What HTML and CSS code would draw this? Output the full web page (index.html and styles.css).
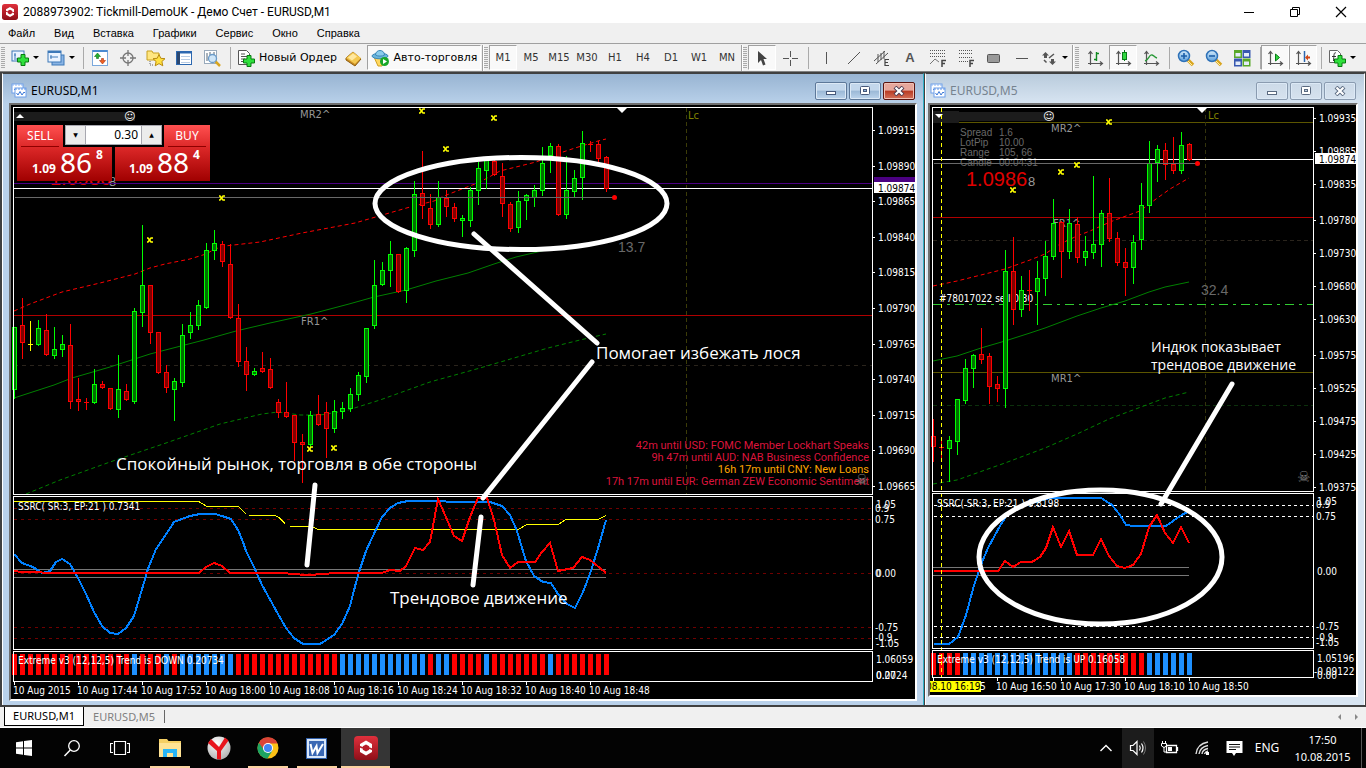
FILE: index.html
```html
<!DOCTYPE html>
<html lang="ru">
<head>
<meta charset="utf-8">
<title>2088973902: Tickmill-DemoUK - Демо Счет - EURUSD,M1</title>
<link rel="stylesheet" href="styles.css">
</head>
<body>
<svg width="0" height="0" class="defs" aria-hidden="true">
  <defs>
    <linearGradient id="gBlue" x1="0" y1="0" x2="0" y2="1"><stop offset="0" stop-color="#d6ecfb"/><stop offset="1" stop-color="#5b9fdc"/></linearGradient>
    <linearGradient id="gRed" x1="0" y1="0" x2="0" y2="1"><stop offset="0" stop-color="#e0303c"/><stop offset="1" stop-color="#8e0f18"/></linearGradient>
    <radialGradient id="gBall" cx=".4" cy=".3" r=".8"><stop offset="0" stop-color="#fff"/><stop offset="1" stop-color="#aaa"/></radialGradient>
    <symbol id="plus" viewBox="0 0 12 12"><path d="M4 .5h4V4h3.500v4H8v3.500H4V8H.5V4H4z" fill="#2fe03c" stroke="#087a10"/></symbol>
    <symbol id="mt" viewBox="0 0 24 24"><rect width="24" height="24" rx="4" fill="url(#gRed)"/><path d="M12 4.500l6 3.500v8l-6 3.500-6-3.500V8z" fill="#fff"/><path d="M12 8.500l3.200 1.800v3.500L12 15.600l-3.200-1.800v-3.500z" fill="#b81c28"/><path d="M4 10l5 2M20 14l-5-2" stroke="#b81c28" stroke-width="1.500"/></symbol>
    <symbol id="lens" viewBox="0 0 18 18"><path d="M11 11l5 5" stroke="#d9a520" stroke-width="3.500"/><path d="M11 12l4 4" stroke="#fff0a0"/><circle cx="7" cy="7" r="5.500" fill="url(#gBlue)" stroke="#2f72b8" stroke-width="1.500"/></symbol>
    <symbol id="axes" viewBox="0 0 18 18"><path d="M4.500 16V3M2.500 5l2-2.500 2 2.500M2 14.500h14M14 12.500l2.500 2-2.500 2" fill="none" stroke="#555" stroke-width="1.200"/></symbol>
    <symbol id="chartwin" viewBox="0 0 16 16"><rect x="1" y="1" width="11" height="9" fill="#fff" stroke="#6fa0ea"/><path d="M1 2h11" stroke="#8ab4f0" stroke-dasharray="2 1"/><path d="M3 7l2-2 2 2" fill="none" stroke="#3a78d8"/><rect x="4" y="5" width="11" height="9" fill="#fff" stroke="#6fa0ea"/><path d="M4 6h11" stroke="#5a93e8" stroke-dasharray="2 1"/><path d="M5.500 10l1.500 2 2-3.500 2 3.500 2-3 1 1" fill="none" stroke="#3a78d8"/></symbol>
  </defs>
</svg>

<header class="titlebar">
  <svg class="app-ico" viewBox="0 0 24 24"><use href="#mt"/></svg>
  <h1>2088973902: Tickmill-DemoUK - Демо Счет - EURUSD,M1</h1>
  <div class="wbtns">
    <button aria-label="Свернуть"><svg width="12" height="12"><path d="M1 6.500h10" stroke="#000"/></svg></button>
    <button aria-label="Восстановить"><svg width="12" height="12"><path d="M1.500 3.500h7v7h-7zM3.500 3V1.500h7v7H9" fill="none" stroke="#000"/></svg></button>
    <button aria-label="Закрыть"><svg width="12" height="12"><path d="M1 1l10 10M11 1L1 11" stroke="#000" stroke-width="1.200"/></svg></button>
  </div>
</header>

<nav class="menu">
  <button>Файл</button><button>Вид</button><button>Вставка</button><button>Графики</button><button>Сервис</button><button>Окно</button><button>Справка</button>
</nav>

<div class="toolbar" role="toolbar">
  <span class="grip"></span>
  <button class="tb drop" aria-label="Новый график"><svg width="18" height="18"><rect x="1" y="2" width="12" height="10" fill="#eaf3ff" stroke="#3c78b8"/><path d="M4 4v5M3 6h2M3 10h8" stroke="#3c78b8"/><use href="#plus" x="6" y="5" width="12" height="12"/></svg></button>
  <button class="tb drop" aria-label="Профили"><svg width="18" height="18"><rect x="5" y="6" width="12" height="10" fill="#8ab4e4" stroke="#3c78b8"/><rect x="1" y="2" width="13" height="11" fill="#eaf3ff" stroke="#3c78b8"/><path d="M1 3h13" stroke="#3c78b8" stroke-width="2"/><path d="M4 6v4M3 8h8" stroke="#3c78b8"/></svg></button>
  <span class="sep s7"></span>
  <button class="tb" aria-label="Обзор рынка"><svg width="18" height="18"><rect x="1.500" y="1.500" width="15" height="15" fill="#fff" stroke="#7aa8dc"/><path d="M1.500 2h15" stroke="#4a8ad0" stroke-width="2"/><path d="M6.500 4l3 3.500h-2v2h-2v-2h-2z" fill="#20b030" stroke="#107018" stroke-width=".6"/><path d="M11.500 15l3-3.500h-2v-2h-2v2h-2z" fill="#f06020" stroke="#a83010" stroke-width=".6"/></svg></button>
  <button class="tb" aria-label="Окно данных"><svg width="18" height="18"><circle cx="9" cy="9" r="5" fill="none" stroke="#777" stroke-width="1.300"/><path d="M9 1v6M9 11v6M1 9h6M11 9h6" stroke="#777" stroke-width="1.300"/></svg></button>
  <button class="tb" aria-label="Навигатор"><svg width="20" height="18"><path d="M1 2h5l1 2h6v7H1z" fill="#ffe680" stroke="#c8a020"/><path d="M4 12v4h3" stroke="#666" stroke-dasharray="1" fill="none"/><path d="M13 5.500l1.800 3.800 4.200.4-3.100 2.800.9 4.300-3.800-2.200-3.800 2.200.9-4.300L7 9.700l4.200-.4z" fill="#ffe040" stroke="#b88a10"/></svg></button>
  <button class="tb" aria-label="Терминал"><svg width="18" height="18"><rect x="1.500" y="2.500" width="15" height="13" fill="#fff" stroke="#2c68b0"/><path d="M2 3.500h14" stroke="#2c68b0" stroke-width="2"/><path d="M3.500 3v12" stroke="#2c4870" stroke-width="3"/><path d="M6 7.500h9M6 10.500h9M6 13.500h9" stroke="#b8cce4"/></svg></button>
  <button class="tb" aria-label="Тестер стратегий"><svg width="18" height="18"><rect x="1.500" y="1.500" width="12" height="13" fill="#fff" stroke="#9ab"/><path d="M4 4v8M7 3v7M11 3v4" stroke="#567"/><path d="M12 12l5 5" stroke="#d9a520" stroke-width="2.500"/><circle cx="9.500" cy="9.500" r="4" fill="#cfe6f8" stroke="#6a9ac8" stroke-width="1.300"/></svg></button>
  <span class="sep"></span>
  <button class="tb text order"><svg width="20" height="18"><path d="M2.500 1.500h8l3 3v11h-11z" fill="#fff" stroke="#555"/><path d="M5 5h4M5 7.500h6M5 10h4M5 12.500h4" stroke="#555"/><use href="#plus" x="7" y="6" width="12" height="12"/></svg>Новый Ордер</button>
  <button class="tb" aria-label="MetaEditor"><svg width="18" height="18"><path d="M2 9l7-6 8 7-6 7-9-6z" fill="#c88a20" stroke="#906010"/><path d="M2 9l7-6 8 6-6 6z" fill="#f4c850"/><path d="M4 8.500l5-4 4 3-5 4z" fill="#ffe8a0"/></svg></button>
  <button class="tb text on auto" aria-pressed="true"><svg width="20" height="18"><path d="M3 8h12l-4 9H7z" fill="#ffd860" stroke="#d0a020"/><ellipse cx="9" cy="7" rx="8" ry="2.800" fill="#6ab4dc" stroke="#3a88b8"/><path d="M4.500 6c0-6 9-6 9 0-2 1.500-7 1.500-9 0z" fill="#8accec" stroke="#3a88b8"/><circle cx="13.500" cy="12.500" r="4.500" fill="#18a828"/><path d="M12 10l4 2.500-4 2.500z" fill="#fff"/></svg>Авто-торговля</button>
  <span class="edge"></span><span class="grip g2"></span>
  <button class="tb tf on" aria-pressed="true">M1</button><button class="tb tf">M5</button><button class="tb tf">M15</button><button class="tb tf">M30</button><button class="tb tf">H1</button><button class="tb tf">H4</button><button class="tb tf">D1</button><button class="tb tf">W1</button><button class="tb tf">MN</button>
  <span class="edge"></span><span class="grip g2"></span>
  <button class="tb on" aria-label="Курсор" aria-pressed="true"><svg width="18" height="18"><path d="M5 2v12l3-3 2 5.500 2.500-1L10.500 10H14z" fill="#444"/></svg></button>
  <button class="tb" aria-label="Перекрестие"><svg width="18" height="18"><path d="M9.500 2v6M9.500 11v6M2 9.500h6M11 9.500h6" stroke="#555"/></svg></button>
  <span class="sep"></span>
  <button class="tb" aria-label="Вертикальная линия"><svg width="18" height="18"><path d="M9.500 3v12" stroke="#555"/></svg></button>
  <button class="tb" aria-label="Трендовая линия"><svg width="18" height="18"><path d="M3 15L15 3" stroke="#555"/></svg></button>
  <button class="tb" aria-label="Канал"><svg width="18" height="18"><path d="M1 12L12 2M3 15L15 4M5 5v8M8 4v7M11 2v8" stroke="#555"/><path d="M16 10.500h-4v6h4M12 13.500h3" fill="none" stroke="#444" stroke-width="1.200"/></svg></button>
  <button class="tb letter" aria-label="Текст">A</button>
  <button class="tb" aria-label="Фибоначчи"><svg width="18" height="18"><path d="M1 1.500h15M1 4.500h15M1 7.500h15" stroke="#555" stroke-dasharray="1"/><path d="M1 15l5-5 4 3" fill="none" stroke="#777"/><path d="M13 18v-6.500h4M13 14.500h3" fill="none" stroke="#444" stroke-width="1.500"/></svg></button>
  <button class="tb" aria-label="Веер"><svg width="18" height="18"><path d="M2 1.500h13M2 4.500h13M2 8.500h13M2 12.500h9" stroke="#555" stroke-dasharray="1"/><path d="M13 18v-6.500h4M13 14.500h3" fill="none" stroke="#444" stroke-width="1.500"/></svg></button>
  <button class="tb" aria-label="Прямоугольник"><svg width="18" height="18"><rect x="2.500" y="5.500" width="12" height="8" rx="1" fill="#999" stroke="#555"/></svg></button>
  <button class="tb" aria-label="Горизонтальная линия"><svg width="18" height="18"><path d="M3 9.500h12" stroke="#555"/></svg></button>
  <button class="tb drop" aria-label="Стрелки"><svg width="18" height="18"><path d="M5.500 3l3.500 3.500H7V9H4V6.500H2zM12.500 16L9 12.500h2V10h3v2.500h2z" fill="#555"/><path d="M4 11l2.500 2.500M9 9l5-4" stroke="#555" stroke-width="1.500"/></svg></button>
  <span class="edge"></span><span class="grip"></span>
  <button class="tb" aria-label="Бары"><svg width="18" height="18"><use href="#axes" width="18" height="18"/><path d="M10.500 3v9M8 10.500h2.500M10.500 4.500H13" stroke="#108a20" stroke-width="1.400"/></svg></button>
  <button class="tb on" aria-label="Свечи" aria-pressed="true"><svg width="18" height="18"><use href="#axes" width="18" height="18"/><path d="M10.500 1v11" stroke="#0a7a18"/><rect x="8.500" y="3.500" width="4" height="7" fill="#30d840" stroke="#0a7a18"/></svg></button>
  <button class="tb" aria-label="Линия"><svg width="18" height="18"><use href="#axes" width="18" height="18"/><path d="M3 12c4-1 4-7 7-6 3 1 2 2 5 3" fill="none" stroke="#2a9a38" stroke-width="1.400"/></svg></button>
  <span class="sep s7"></span>
  <button class="tb" aria-label="Увеличить"><svg width="18" height="18"><use href="#lens" width="18" height="18"/><path d="M7 4v6M4 7h6" stroke="#1c5fa8" stroke-width="1.600"/></svg></button>
  <button class="tb" aria-label="Уменьшить"><svg width="18" height="18"><use href="#lens" width="18" height="18"/><path d="M4 7h6" stroke="#1c5fa8" stroke-width="1.600"/></svg></button>
  <button class="tb" aria-label="Окна мозаикой"><svg width="18" height="18"><path d="M1 1h8v8H1zM9.500 9.500h8v8h-8z" fill="#58a828"/><path d="M9.500 1h8v8h-8zM1 9.500h8v8H1z" fill="#3858b0"/><path d="M2.500 4h5v3.500h-5zM11 4h5v3.500h-5zM2.500 12.500h5V16h-5zM11 12.500h5V16h-5z" fill="#e4ecf8"/></svg></button>
  <span class="sep s5"></span>
  <button class="tb on" aria-label="Автопрокрутка" aria-pressed="true"><svg width="18" height="18"><use href="#axes" width="18" height="18"/><path d="M9.500 5l4 3.500-4 3.500z" fill="#30d840" stroke="#0a7a18"/></svg></button>
  <button class="tb on" aria-label="Сдвиг графика" aria-pressed="true"><svg width="18" height="18"><use href="#axes" width="18" height="18"/><path d="M10.500 2v11" stroke="#2c68b0" stroke-width="1.500"/><path d="M11 8.500l3-3v2h2v2h-2v2z" fill="#d04818"/></svg></button>
  <span class="sep s7"></span>
  <button class="tb drop" aria-label="Индикаторы"><svg width="18" height="18"><path d="M1.500 1.500h8l3 3v9h-11z" fill="#fff" stroke="#666"/><path d="M8 4c-2-1-2 1-2.500 8M4 7.500h4" fill="none" stroke="#333"/><use href="#plus" x="6" y="6" width="12" height="12"/></svg></button>
</div>

<main class="workspace">
  <section class="win active">
    <header class="wtitle"><svg width="16" height="16"><use href="#chartwin"/></svg><h2>EURUSD,M1</h2>
      <button class="cap" aria-label="Свернуть"><svg width="14" height="10"><rect x="2.500" y="5.500" width="9" height="3" fill="#fff" stroke="#46587a"/></svg></button>
      <button class="cap" aria-label="Развернуть"><svg width="14" height="10"><rect x="2.500" y=".5" width="9" height="8" rx="1" fill="#fff" stroke="#46587a"/><rect x="5.500" y="3.500" width="3" height="2" fill="#8fb0d8" stroke="#46587a"/></svg></button>
      <button class="cap close" aria-label="Закрыть"><svg width="14" height="10"><path d="M3 1l8 8M11 1L3 9" stroke="#4a3a50" stroke-width="4"/><path d="M3.500 1.500l7 7M10.500 1.500l-7 7" stroke="#fff" stroke-width="2.200"/></svg></button>
    </header>
    <div class="chart-host">
      <svg class="chart" id="m1" viewBox="11 105 904 594" preserveAspectRatio="xMinYMin meet" role="img" aria-label="EURUSD M1">
        <rect x="14" y="112" width="121" height="9" fill="#1c1c1c"/><path d="M16 118h8l-4-4z" fill="#fff"/><text x="124" y="120" class="smile">☺</text>
        <g class="px">
          <path d="M14 365.500h858" stroke="#2a241c" stroke-dasharray="4 4"/>
          <path d="M686.500 108v386" stroke="#3c3c08" stroke-dasharray="4 3"/>
          <path d="M14 315.500h858" stroke="#b00000"/>
        </g>
        <text x="300" y="118" class="tag">MR2^</text><text x="301" y="325" class="tag">FR1^</text><text x="688" y="119" class="tag olive">Lc</text>
        <text x="50" y="185" class="bid">1.0986</text><text x="109" y="186" class="bid-s">8</text>
        <text x="618" y="252" class="num">13.7</text>
        <g class="thin">
          <polyline class="r dash" points="14,311 30,304 62,292 100,283 135,274 150,268 165,264 190,259 206,254 215,249 225,246 260,242 302,233 355,223 379,216 410,207 434,201 444,196 480,182 500,171 536,162 560,153 575,148 598,141 606,139"/>
          <polyline class="g" points="14,398 54,385 72,378 110,367 150,354 204,340 236,331 270,323 311,314 349,304 374,297 406,290 436,281 468,273 494,264 516,257 546,250"/>
          <polyline class="g dash" points="26,494 60,480 110,462 166,443 220,424 262,414 278,412 300,415 320,415 345,411 380,400 430,382 480,368 548,348 580,340 606,334"/>
        </g>
        <g class="px"><path d="M14 183.500h858" stroke="#4b0082"/><path d="M14 188.500h858" stroke="#fff"/></g>
        <g class="candles px"></g>
        <path class="px" d="M15 197.500h599" stroke="#696969"/><circle cx="614.500" cy="197.500" r="2.500" fill="#f00"/>
        <g class="marks"></g>
        <g class="news">
          <text x="869" y="449">42m until USD: FOMC Member Lockhart Speaks</text>
          <text x="869" y="461">9h 47m until AUD: NAB Business Confidence</text>
          <text x="869" y="473" class="or">16h 17m until CNY: New Loans</text>
          <text x="869" y="485">17h 17m until EUR: German ZEW Economic Sentiment</text>
        </g>
        <text x="855" y="485" class="skull">☠</text>
        <path d="M617 108h10l-5 5z" fill="#fff"/>
        <g class="px">
          <path d="M14 508.500h858M14 519.500h858M14 573.500h858M14 627.500h858M14 638.500h858" stroke="#700000" stroke-dasharray="3 4"/>
          <path d="M14 569.500h592M14 577.500h592" stroke="#777"/>
          <polyline class="y" points="14,501 198,501 206,506 238,506 246,514"/><path class="y" d="M249 515.500h26l4 2 6 6M290 526.500h22l6 3h200l9-5h31l8-5h32l8-4"/>
        </g>
        <g class="osc px">
          <polyline class="b" points="14,554 22,563 33,567 42,573 50,571 56,562 62,559 70,564 78,578 86,594 94,612 102,626 110,633 118,634 126,628 134,616 140,596 148,569 156,549 163,539 174,522 190,516 200,514 215,514 222,516 231,519 238,530 243,542 246,551 254,567 262,585 278,614 286,628 294,638 303,644 320,644 334,635 342,624 350,606 358,575 366,551 372,538 382,517 390,508 398,503 408,501 442,501 450,502 490,502 502,506 510,515 517,531 526,561 534,576 543,582 551,583 558,594 567,604 575,608 583,592 591,571 599,545 606,520"/>
          <polyline class="r" points="14,571 22,572 62,573 199,573 206,567 214,563 222,566 230,573 286,573 290,574 310,575 335,573 382,573 390,570 400,571 406,566 415,548 423,550 430,542 438,499 445,515 454,536 462,541 470,517 478,498 487,498 494,520 502,555 510,568 518,562 535,562 542,552 550,543 558,571 573,568 582,557 590,560 600,568 606,573"/>
        </g>
        <text x="18" y="510" class="lbl">SSRC( SR:3, EP:21 ) 0.7341</text>
        <g class="bars px"></g>
        <text x="18" y="664" class="lbl">Extreme v3 (12,12,5) Trend is DOWN 0.20734</text>
        <path class="px frame" d="M13.500 107.500h859v387h-859zM13.500 496.500h859v153h-859zM13.500 651.500h859v30h-859z"/>
        <g class="axis"></g>
        <rect x="874" y="177" width="41" height="6" fill="#4b0082"/><rect x="874" y="182" width="41" height="11" fill="#fff"/><text x="878" y="192" class="lbl now">1.09874</text>
        <g class="ink"><ellipse cx="521" cy="203.500" rx="146" ry="46"/><path d="M474 234L597 343M592 362L483 498M481 517l-8 68M315 485l-8 80"/></g>
        <g class="note big"><text x="596" y="359">Помогает избежать лося</text><text x="116" y="470">Спокойный рынок, торговля в обе стороны</text><text x="390" y="604">Трендовое движение</text></g>
      </svg>
      <form class="oneclick">
        <button type="button" class="deal sell"><span class="side">SELL</span><span class="price">1.09<b>86</b><sup>8</sup></span></button>
        <button type="button" class="deal buy"><span class="side">BUY</span><span class="price">1.09<b>88</b><sup>4</sup></span></button>
        <div class="lots"><button type="button" aria-label="Меньше">▼</button><input aria-label="Объем" value="0.30"><button type="button" aria-label="Больше">▲</button></div>
      </form>
    </div>
  </section>

  <section class="win idle">
    <header class="wtitle"><svg width="16" height="16"><use href="#chartwin"/></svg><h2>EURUSD,M5</h2>
      <button class="cap" aria-label="Свернуть"><svg width="14" height="10"><rect x="2.500" y="5.500" width="9" height="3" fill="#fff" stroke="#5a6a80"/></svg></button>
      <button class="cap" aria-label="Развернуть"><svg width="14" height="10"><rect x="2.500" y=".5" width="9" height="8" rx="1" fill="#fff" stroke="#5a6a80"/><rect x="5.500" y="3.500" width="3" height="2" fill="#c0d0e0" stroke="#5a6a80"/></svg></button>
      <button class="cap" aria-label="Закрыть"><svg width="14" height="10"><path d="M3 1l8 8M11 1L3 9" stroke="#5a6a80" stroke-width="4"/><path d="M3.500 1.500l7 7M10.500 1.500l-7 7" stroke="#fff" stroke-width="2.200"/></svg></button>
    </header>
    <div class="chart-host">
      <svg class="chart" id="m5" viewBox="930 105 426 590" preserveAspectRatio="xMinYMin meet" role="img" aria-label="EURUSD M5">
        <g class="px">
          <path d="M933 122.500h380M933 372.500h380" stroke="#5c5600"/>
          <path d="M933 240.500h380" stroke="#2a241c" stroke-dasharray="4 3"/>
          <path d="M933 405.500h380" stroke="#0c300c" stroke-dasharray="4 3"/>
          <path d="M1205.500 108v383" stroke="#33330c" stroke-dasharray="4 3"/>
          <path d="M933 217.500h380" stroke="#b00000"/>
          <path d="M933 304.500h380" stroke="#32cd32" stroke-dasharray="9 5 3 5"/>
        </g>
        <rect x="933" y="111" width="26" height="12" fill="#1c1c1c"/><rect x="959" y="112" width="95" height="9" fill="#1c1c1c"/><path d="M935 114h8l-4 4z" fill="#fff"/><text x="1043" y="120" class="smile">☺</text>
        <text x="1051" y="132" class="tag">MR2^</text><text x="1053" y="227" class="tag">FR1^</text><text x="1051" y="382" class="tag">MR1^</text><text x="1208" y="119" class="tag olive">Lc</text>
        <g class="info"><text x="960" y="136">Spread</text><text x="999" y="136">1.6</text><text x="960" y="146">LotPip</text><text x="999" y="146">10.00</text><text x="960" y="156">Range</text><text x="999" y="156">105, 66</text><text x="960" y="166">Candle</text><text x="999" y="166">00:04:31</text></g>
        <text x="966" y="186" class="bid">1.0986</text><text x="1028" y="186" class="bid-s">8</text>
        <text x="1201" y="295" class="num">32.4</text>
        <text x="939" y="302" class="lbl">#78017022 sell 0.30</text>
        <g class="thin">
          <polyline class="r dash" points="933,286 957,281 981,275 1005,269 1030,260 1045,254 1060,244 1077,236 1090,231 1110,222 1126,216 1140,211 1156,199 1170,189 1189,178"/>
          <polyline class="g" points="933,361 957,356 981,348 1005,341 1030,333 1045,328 1077,316 1101,308 1125,301 1149,292 1165,287 1189,282"/>
          <polyline class="g dash" points="933,484 957,480 1005,463 1045,448 1077,434 1109,419 1149,404 1165,398 1189,392"/>
        </g>
        <path class="px" d="M933 159.500h380" stroke="#fff"/>
        <g class="candles px"></g>
        <path class="px" d="M934 163.500h263" stroke="#696969"/><circle cx="1197.500" cy="163.500" r="2.500" fill="#f00"/>
        <g class="marks"></g>
        <text x="1297" y="482" class="skull">☠</text>
        <path d="M1197 108h10l-5 5z" fill="#fff"/>
        <g class="px">
          <path d="M934 505.500h379M934 516.500h379M934 626.500h379M934 637.500h379" stroke="#fff" stroke-dasharray="3 3"/>
          <path d="M933 567.500h256M933 575.500h256" stroke="#777"/>
        </g>
        <g class="osc px">
          <polyline class="b" points="934,644 949,644 958,637 966,615 973,589 980,567 988,548 1000,526 1008,513 1022,506 1050,498 1101,498 1112,505 1120,515 1126,525 1134,526 1166,526 1180,516 1189,511"/>
          <polyline class="r" points="934,571 998,571 1005,561 1013,567 1021,562 1032,562 1040,557 1046,548 1053,527 1061,547 1069,531 1077,555 1093,555 1101,539 1109,556 1117,566 1125,568 1133,565 1141,554 1149,527 1157,515 1165,533 1173,543 1181,527 1189,543"/>
        </g>
        <text x="937" y="507" class="lbl">SSRC( SR:3, EP:21 ) 0.8198</text>
        <g class="bars px"></g>
        <text x="937" y="663" class="lbl">Extreme v3 (12,12,5) Trend is UP 0.16058</text>
        <path class="px" d="M941.500 108v569" stroke="#ff0" stroke-dasharray="4 3"/>
        <path class="px frame" d="M932.500 107.500h381v384h-381zM932.500 493.500h381v155h-381zM932.500 650.500h381v27h-381z"/>
        <g class="axis"></g>
        <rect x="1315" y="153" width="41" height="11" fill="#fff"/><text x="1319" y="163" class="lbl now">1.09874</text>
        <rect x="930" y="681" width="51" height="11" fill="#ff0"/><text x="926" y="690" class="lbl now">08.10 16:19</text><text x="980" y="690" class="lbl">5</text>
        <g class="ink"><ellipse cx="1100.500" cy="557" rx="121.500" ry="67"/><path d="M1232 384l-71 120"/></g>
        <g class="note"><text x="1151" y="352">Индюк показывает</text><text x="1151" y="370">трендовое движение</text></g>
      </svg>
    </div>
  </section>
</main>

<div class="tabs" role="tablist">
  <button class="on" role="tab" aria-selected="true">EURUSD,M1</button><button role="tab">EURUSD,M5</button><span class="bar"></span>
  <div class="scroll"><button aria-label="Назад"><svg width="8" height="8"><path d="M5 1v6L2 4z" fill="#888"/></svg></button><button aria-label="Вперед"><svg width="8" height="8"><path d="M2 1v6l3-3z" fill="#888"/></svg></button></div>
</div>

<footer class="taskbar">
  <button aria-label="Пуск"><svg width="16" height="16"><path d="M0 2.300l7-1V7.500H0zM8 1.100L16 0v7.500H8zM0 8.500h7v6.200l-7-1zM8 8.500h8V16l-8-1.100z" fill="#fff"/></svg></button>
  <button aria-label="Поиск"><svg width="18" height="18"><circle cx="11" cy="7" r="5.300" fill="none" stroke="#fff" stroke-width="1.300"/><path d="M7.300 11L1.500 17" stroke="#fff" stroke-width="1.500"/></svg></button>
  <button aria-label="Представление задач"><svg width="20" height="16"><path d="M4.500 1.500h11v13h-11zM3 3.500H.5v9H3M17 3.500h2.500v9H17" fill="none" stroke="#fff" stroke-width="1.200"/></svg></button>
  <span class="gap"></span>
  <button class="app run" aria-label="Проводник"><svg width="22" height="20"><path d="M0 1h8l1.500 2H22v16H0z" fill="#f5cf63"/><path d="M0 5h22v14H0z" fill="#ffe394"/><path d="M4 19v-8h14v8h-4v-4H8v4z" fill="#29b6f6"/></svg></button>
  <button class="app" aria-label="Яндекс"><svg width="24" height="24"><circle cx="12" cy="12" r="11.500" fill="url(#gBall)"/><path d="M1 7l3-4 8 8 6-9.500 3.500 3L14 15v8.500l-4-.5v-8z" fill="#e8141c"/></svg></button>
  <button class="app run" aria-label="Chrome"><svg width="22" height="22"><circle cx="11" cy="11" r="10.500" fill="#fbc116"/><path d="M1.900 5.700A10.500 10.500 0 0 0 10.500 21.500l5-8L11 11z" fill="#1da462"/><path d="M1.900 5.700A10.500 10.500 0 0 1 20.600 6.500H11L7 13z" fill="#db4437"/><circle cx="11" cy="11" r="5" fill="#fff"/><circle cx="11" cy="11" r="4" fill="#4285f4"/></svg></button>
  <button class="app run" aria-label="Word"><svg width="21" height="21"><rect x=".5" y=".5" width="20" height="20" fill="#d8e6f8" stroke="#2f5ea8"/><rect x="3" y="3" width="15" height="15" fill="#3a68b4"/><path d="M4.500 6l2 9 4-7 1 7 5.500-9" fill="none" stroke="#fff" stroke-width="2"/></svg></button>
  <button class="app cur" aria-label="MetaTrader"><svg width="24" height="24"><use href="#mt"/></svg></button>
  <div class="tray">
    <button aria-label="Скрытые значки"><svg width="14" height="10"><path d="M1.500 8L7 2.500 12.500 8" fill="none" stroke="#fff" stroke-width="1.400"/></svg></button>
    <button class="vol" aria-label="Громкость"><svg width="18" height="16"><path d="M1.500 5.500H4l4-4v13l-4-4H1.500z" fill="none" stroke="#fff" stroke-width="1.200"/><path d="M10.500 5.500q1.500 2.500 0 5M12.500 3.500q3 4.500 0 9" fill="none" stroke="#fff" stroke-width="1.200"/><path d="M14.500 1.500q4 6.500 0 13" fill="none" stroke="#777"/></svg></button>
    <button aria-label="Батарея"><svg width="18" height="14"><path d="M5.500 4.500h10v7H5.500zM16.500 6v4" fill="none" stroke="#fff" stroke-width="1.300"/><rect x="7" y="6" width="4" height="4" fill="#fff"/><path d="M1.500 0v2M4.500 0v2M.5 2.500h5V5L3 6.500.5 5zM3 6v5h2" fill="none" stroke="#fff"/></svg></button>
    <button aria-label="Сеть"><svg width="15" height="14"><path d="M1 13Q2 3 13 1M4 13Q5 6 13 4.500M7 13q.500-4.500 6-5.500M9.500 13q.5-2 3.500-3" fill="none" stroke="#ddd" stroke-width="1.400"/><rect x="11" y="11" width="3" height="3" fill="#fff"/></svg></button>
    <button aria-label="Уведомления"><svg width="17" height="17"><path d="M.5 1h16v12H10l-2 3-2-3H.5z" fill="#fff"/><path d="M3 4.500h11M3 7h11M3 9.500h7" stroke="#111"/></svg></button>
    <button class="lang">ENG</button>
    <time class="clock"><span>17:50</span><span>10.08.2015</span></time>
    <span class="desk"></span>
  </div>
</footer>
<script src="app.js"></script>
</body>
</html>
```
FILE: styles.css
```css
* { box-sizing: border-box; }
html, body { margin: 0; }
body { display: flex; flex-direction: column; min-height: 100vh; background: #f0f0f0; font: 12px/16px "Noto Sans", "Open Sans", sans-serif; color: #000; }
button { margin: 0; padding: 0; border: 0; background: none; font: inherit; color: inherit; }
svg { display: block; flex: none; }
.defs { position: absolute; }
h1, h2 { margin: 0; font-weight: 400; }

.titlebar { display: flex; align-items: center; height: 23px; padding: 0 2px; background: #fff; }
.app-ico { width: 16px; height: 16px; }
.titlebar h1 { flex: 1; padding-left: 5px; font: 12px/16px Roboto, sans-serif; }
.wbtns { display: flex; }
.wbtns button { display: grid; place-items: center; width: 46px; height: 23px; }

.menu { display: flex; gap: 19px; height: 21px; padding-left: 8px; border-bottom: 1px solid #a0a0a0; font: 11px/20px "Liberation Sans", sans-serif; }

.toolbar { display: flex; align-items: center; height: 28px; border-bottom: 1px solid #808080; }
.grip { width: 4px; height: 22px; margin: 0 2px 0 1px; background: repeating-linear-gradient(#aaa 0 1px, #f0f0f0 1px 2px); }
.grip.g2 { margin: 0 1px 0 0; }
.sep { width: 8px; height: 22px; background: linear-gradient(#aaa, #aaa) 4px 0 / 1px 100% no-repeat; }
.s5 { width: 5px; }
.s7 { width: 7px; }
.edge { width: 2px; height: 26px; border-left: 1px solid #a0a0a0; background: #fff; }
.tb { display: flex; align-items: center; justify-content: center; width: 28px; height: 25px; color: #333; }
.tb.on { background: #f9f9f9; border: 1px solid #fff; border-top-color: #a0a0a0; border-left-color: #a0a0a0; background-clip: padding-box; }
.drop { width: 36px; gap: 4px; }
.drop::after { content: ""; border: 3px solid transparent; border-top-color: #000; border-bottom: 0; }
.text { font: 11px/16px "DejaVu Sans", sans-serif; gap: 3px; color: #000; }
.order { width: 105px; }
.auto { width: 114px; margin-right: 1px; }
.tf { font: 10px/14px "DejaVu Sans", sans-serif; }
.letter { font: bold 13px/16px "Liberation Sans", sans-serif; color: #555; }

.workspace { flex: 1; display: grid; grid-template-columns: 922fr 440fr; column-gap: 1px; padding: 1px 1px 2px 2px; background: #404040; }
.win { display: flex; flex-direction: column; min-width: 0; border: solid #404040; border-width: 1px 1px 0; }
.active { padding: 0 6px 4px; background: linear-gradient(#98b4d2, #b9d1ea 30px); border-left-color: #fff; border-right-color: #30b0c8; }
.idle { padding: 0 6px 8px 2px; background: linear-gradient(#b9cbdc, #d8e5f2 30px); border-right-color: #fff; border-left-color: #fff; }
.wtitle { display: flex; align-items: center; gap: 2px; height: 29px; padding: 4px 2px 0; }
.wtitle h2 { flex: 1; padding-left: 2px; font-size: 12px; }
.idle h2 { color: #76838f; }
.cap { display: grid; place-items: center; width: 32px; height: 18px; border: 1px solid #5d7899; border-radius: 2px; background: linear-gradient(#c3d7ec 45%, #9bb8d6 50%, #bdd4ec); box-shadow: inset 0 0 0 1px #dce9f6; }
.idle .cap { border-color: #8a9bb0; background: linear-gradient(#ccdae8, #d6e2ee); }
.cap.close { border-color: #5a1410; background: linear-gradient(#e6a79c 45%, #b83a22 50%, #d4725c); box-shadow: inset 0 0 0 1px #f0c0b4; }
.chart-host { position: relative; flex: 1; display: flex; border: 2px solid #fff; border-top-color: #6e6e6e; border-left-color: #6e6e6e; background: #000; }
.chart { width: 100%; height: 100%; }

.px { shape-rendering: crispEdges; }
.frame { fill: none; stroke: #fff; }
.lbl, .axis text { font: 10px "DejaVu Sans Condensed", "DejaVu Sans", sans-serif; font-stretch: condensed; fill: #fff; }
.axis path { stroke: #fff; shape-rendering: crispEdges; }
.lbl.now { fill: #000; }
.tag { font: 10px "DejaVu Sans", sans-serif; fill: #969696; }
.tag.olive { fill: #808000; }
.smile { font: 11px "DejaVu Sans", sans-serif; fill: #fff; }
.skull { font: 15px "DejaVu Sans", sans-serif; fill: #808080; }
.bid { font: 20px "Liberation Sans", sans-serif; fill: #e00000; }
.bid-s { font: 13px "Liberation Sans", sans-serif; fill: #999; }
.num { font: 14px "Liberation Sans", sans-serif; fill: #696969; }
.info { font: 10px "Liberation Sans", sans-serif; fill: #696969; }
.news { font: 11px Roboto, sans-serif; fill: #dc143c; text-anchor: end; }
.news .or { fill: #ffa500; }
.thin polyline { fill: none; stroke-width: 1; }
.thin .r { stroke: #f00; }
.thin .g { stroke: #008000; }
.dash { stroke-dasharray: 4 3; }
.y { fill: none; stroke: #ff0; }
.osc polyline { fill: none; stroke-width: 2; }
.osc .r { stroke: #f00; }
.osc .b { stroke: #0080ff; }
.marks path { fill: none; stroke: #ff0; stroke-width: 1.5; }
.ink { fill: none; stroke: #fff; stroke-width: 5; stroke-linecap: round; }
.note { font: 14px "Open Sans", "Noto Sans", sans-serif; fill: #fff; }
.note.big { font-size: 17px; }

.oneclick { position: absolute; left: 6px; top: 20px; width: 193px; height: 56px; margin: 0; color: #fff; }
.deal { position: absolute; top: 0; width: 96px; height: 56px; background: linear-gradient(#ff5050, #dc2828 40%, #a00000); }
.sell { left: 0; clip-path: polygon(0 0, 46px 0, 46px 22px, 95px 22px, 95px 100%, 0 100%); }
.buy { right: 0; clip-path: polygon(50px 0, 100% 0, 100% 100%, 1px 100%, 1px 22px, 50px 22px); }
.side { position: absolute; top: 2px; width: 38px; height: 20px; border-bottom: 1px solid #900000; font-size: 12px; line-height: 18px; }
.sell .side { left: 4px; }
.buy .side { right: 4px; }
.price { position: absolute; left: 15px; bottom: 0; display: flex; align-items: baseline; gap: 4px; font-weight: 700; font-size: 12px; line-height: 24px; }
.price b { font-weight: 400; font-size: 28px; }
.price sup { align-self: flex-start; font-size: 12px; line-height: 10px; }
.lots { position: absolute; left: 48px; top: 0; display: flex; width: 97px; height: 20px; border: 1px solid #a8a8b0; background: #fff; }
.lots button { width: 19px; background: #ececec; color: #000; font: 6px/18px "DejaVu Sans", sans-serif; }
.lots input { flex: 1; min-width: 0; padding: 0 3px; border: solid #a8a8b0; border-width: 0 1px; background: #fff; font: 12px/18px "Noto Sans", sans-serif; text-align: right; }

.tabs { display: flex; height: 21px; padding-left: 4px; border-bottom: 1px solid #fff; background: #f0f0f0; color: #808080; }
.tabs > button { width: 80px; height: 19px; line-height: 18px; font-size: 11px; }
.tabs .on { border: 1px solid #000; border-top: 0; background: #fff; color: #000; }
.bar { width: 1px; height: 13px; margin: 3px 0 0; background: #666; }
.scroll { display: flex; margin-left: auto; padding-right: 1px; }
.scroll button { display: grid; place-items: center; width: 17px; }

.taskbar { display: flex; height: 40px; background: #030303; color: #fff; }
.taskbar button { display: grid; place-items: center; width: 48px; height: 40px; }
.gap { width: 1px; }
.taskbar .app { width: 49px; }
.run { background: linear-gradient(#fad2a0, #fad2a0) center bottom / 40px 2px no-repeat; }
.taskbar .cur { border-bottom: 2px solid #fad2a0; background: #353535; padding-top: 2px; }
.tray { display: flex; margin-left: auto; }
.taskbar .tray button { width: 32px; }
.taskbar .tray .vol { background: #1c1c1c; }
.taskbar .tray .lang { width: 34px; }
.clock { display: flex; flex-direction: column; justify-content: center; width: 77px; text-align: center; font-size: 11px; line-height: 17px; }
.desk { width: 5px; border-left: 1px solid #555; }
```
FILE: app.js
```js
const NS = 'http://www.w3.org/2000/svg';

function add(parent, name, attrs, text) {
  const el = document.createElementNS(NS, name);
  for (const key in attrs) el.setAttribute(key, attrs[key]);
  if (text !== undefined) el.textContent = text;
  parent.appendChild(el);
}

/* Each candle: colour, high, body top, body bottom, low */
const charts = {
  m1: {
    x: 14, axisX: 872, barY: 654, barH: 21, timeY: 682,
    candles: `g 327 327 390 398,r 298 325 343 358,y 321 344 345 350,g 320 328 345 345,r 314 330 355 355,g 327 349 356 358,g 335 344 350 356,r 324 345 402 408,r 378 399 402 410,r 398 402 403 409,g 369 384 403 403,r 381 384 388 388,r 388 388 409 409,g 355 389 410 417,r 384 391 400 400,g 308 311 402 403,g 225 285 313 326,r 285 285 333 343,r 332 332 373 373,r 365 372 388 392,g 378 381 390 420,g 324 335 383 386,g 312 325 333 338,g 300 305 326 329,g 243 250 308 308,g 230 243 251 259,r 241 244 262 266,r 244 264 318 318,r 304 318 362 366,r 347 361 375 390,g 368 371 375 375,r 352 368 372 372,r 358 369 388 388,r 399 402 413 417,r 382 412 417 417,r 415 415 443 460,r 434 442 445 482,g 411 415 445 446,r 395 414 425 425,r 402 412 429 457,g 400 411 429 432,g 402 408 412 418,g 388 394 409 411,g 372 375 395 400,g 328 328 377 382,g 260 285 326 328,g 262 270 285 285,g 241 254 271 286,r 254 254 292 292,g 247 248 291 302,g 181 194 251 256,r 151 193 206 218,r 194 208 225 228,g 181 197 225 226,r 190 198 207 216,r 203 207 219 221,g 215 218 221 236,g 187 190 221 226,g 162 168 191 204,g 157 160 171 188,r 158 161 175 175,r 163 176 204 216,r 202 204 229 231,g 191 201 228 232,g 194 195 201 219,g 185 190 198 206,g 147 163 191 195,g 143 146 156 172,r 144 146 215 215,g 156 190 215 218,g 170 178 192 196,g 131 143 178 199,r 141 144 145 151,r 141 144 159 162,r 156 157 189 191`,
    bars: 'rrrrrrrrrrrrrrrbrrrbrbbbbbbbrrrrrrrrrrrrrbbbbbbbbbbbrbbrrrrbrrrrrrrbrrrrrrr',
    prices: [[130, '1.09915'], [166, '1.09890'], [201, '1.09865'], [237, '1.09840'], [272, '1.09815'], [308, '1.09790'], [344, '1.09765'], [379, '1.09740'], [415, '1.09715'], [450, '1.09690'], [486, '1.09665']],
    levels: [[876, 504, '1.05'], [875, 508, '0.9'], [875, 519, '0.75'], [876, 573, '0.00'], [875, 573, '0'], [875, 627, '-0.75'], [875, 637, '-0.9'], [876, 643, '-1.05'], [876, 659, '1.06059'], [876, 675, '0.2724'], [876, 675, '0.00']],
    times: ['10 Aug 2015', '10 Aug 17:44', '10 Aug 17:52', '10 Aug 18:00', '10 Aug 18:08', '10 Aug 18:16', '10 Aug 18:24', '10 Aug 18:32', '10 Aug 18:40', '10 Aug 18:48'],
    marks: [[222, 198], [150, 240], [310, 449], [334, 448], [422, 111], [494, 118], [446, 149]]
  },
  m5: {
    x: 933, axisX: 1313, barY: 653, barH: 22, timeY: 678,
    candles: `r 419 436 447 461,r 441 447 448 460,g 436 440 449 481,g 399 399 442 454,g 359 368 401 403,g 354 355 369 387,r 328 354 360 363,r 353 356 387 403,r 376 384 389 401,g 250 271 389 407,r 237 271 310 324,g 276 290 310 316,r 270 290 291 310,g 261 278 292 324,g 241 256 279 295,g 199 223 257 259,r 221 222 252 277,g 209 223 252 258,r 217 224 258 262,g 236 251 258 265,g 176 244 253 258,g 210 213 245 266,r 178 213 239 241,r 232 238 263 265,r 248 262 268 295,g 235 242 268 283,g 183 205 240 249,g 141 163 206 212,g 145 149 163 181,r 143 150 165 179,r 137 164 171 173,g 132 145 171 173,r 143 144 160 160`,
    bars: 'rrrrbbbbbbbbbbbbbbrrrrrrrrrbbbbbb',
    prices: [[118, '1.09935'], [151, '1.09885'], [184, '1.09835'], [220, '1.09780'], [253, '1.09730'], [286, '1.09680'], [319, '1.09630'], [355, '1.09575'], [388, '1.09525'], [421, '1.09475'], [454, '1.09425'], [487, '1.09375']],
    levels: [[1317, 501, '1.05'], [1316, 504, '0.9'], [1316, 516, '0.75'], [1317, 571, '0.00'], [1316, 626, '-0.75'], [1316, 637, '-0.9'], [1316, 642, '-1.05'], [1317, 658, '1.05196'], [1317, 675, '0.00'], [1314, 671, '-0.09122']],
    times: ['', '10 Aug 16:50', '10 Aug 17:30', '10 Aug 18:10', '10 Aug 18:50'],
    marks: [[1013, 190], [1061, 172], [1077, 165], [1109, 122]]
  }
};

const tones = { g: ['#00ff00', '#007000'], r: ['#ff0000', '#800000'], y: ['#ffff00', '#ffff00'] };

for (const id in charts) {
  const c = charts[id];
  const root = document.getElementById(id);
  const candles = root.querySelector('.candles');
  c.candles.split(',').forEach((row, i) => {
    const [tone, hi, top, bottom, lo] = row.trim().split(' ').map((v, n) => n ? Number(v) : v);
    const x = c.x + 8 * i;
    const [line, fill] = tones[tone];
    add(candles, 'rect', { x, y: hi, width: 1, height: lo - hi + 1, fill: line });
    add(candles, 'rect', { x: x - 2, y: top, width: 5, height: bottom - top, fill: line });
    if (bottom - top > 2) add(candles, 'rect', { x: x - 1, y: top + 1, width: 3, height: bottom - top - 2, fill });
  });
  const bars = root.querySelector('.bars');
  [...c.bars].forEach((b, i) => add(bars, 'rect', { x: c.x - 2 + 8 * i, y: c.barY, width: 5, height: c.barH, fill: b === 'r' ? '#ff0000' : '#1e90ff' }));
  const axis = root.querySelector('.axis');
  c.prices.forEach(([y, t]) => {
    add(axis, 'path', { d: `M${c.axisX} ${y + 0.5}h3` });
    add(axis, 'text', { x: c.axisX + 6, y: y + 4 }, t);
  });
  c.levels.forEach(([x, y, t]) => add(axis, 'text', { x, y: y + 4 }, t));
  c.times.forEach((t, i) => {
    add(axis, 'path', { d: `M${c.x + 64 * i + 0.5} ${c.timeY}v3` });
    add(axis, 'text', { x: c.x - 1 + 64 * i, y: c.timeY + 12 }, t);
  });
  const marks = root.querySelector('.marks');
  c.marks.forEach(([x, y]) => add(marks, 'path', { d: `M${x - 3} ${y - 2}h1l3 4h2M${x - 3} ${y + 2}h1l3-4h2` }));
}
```
